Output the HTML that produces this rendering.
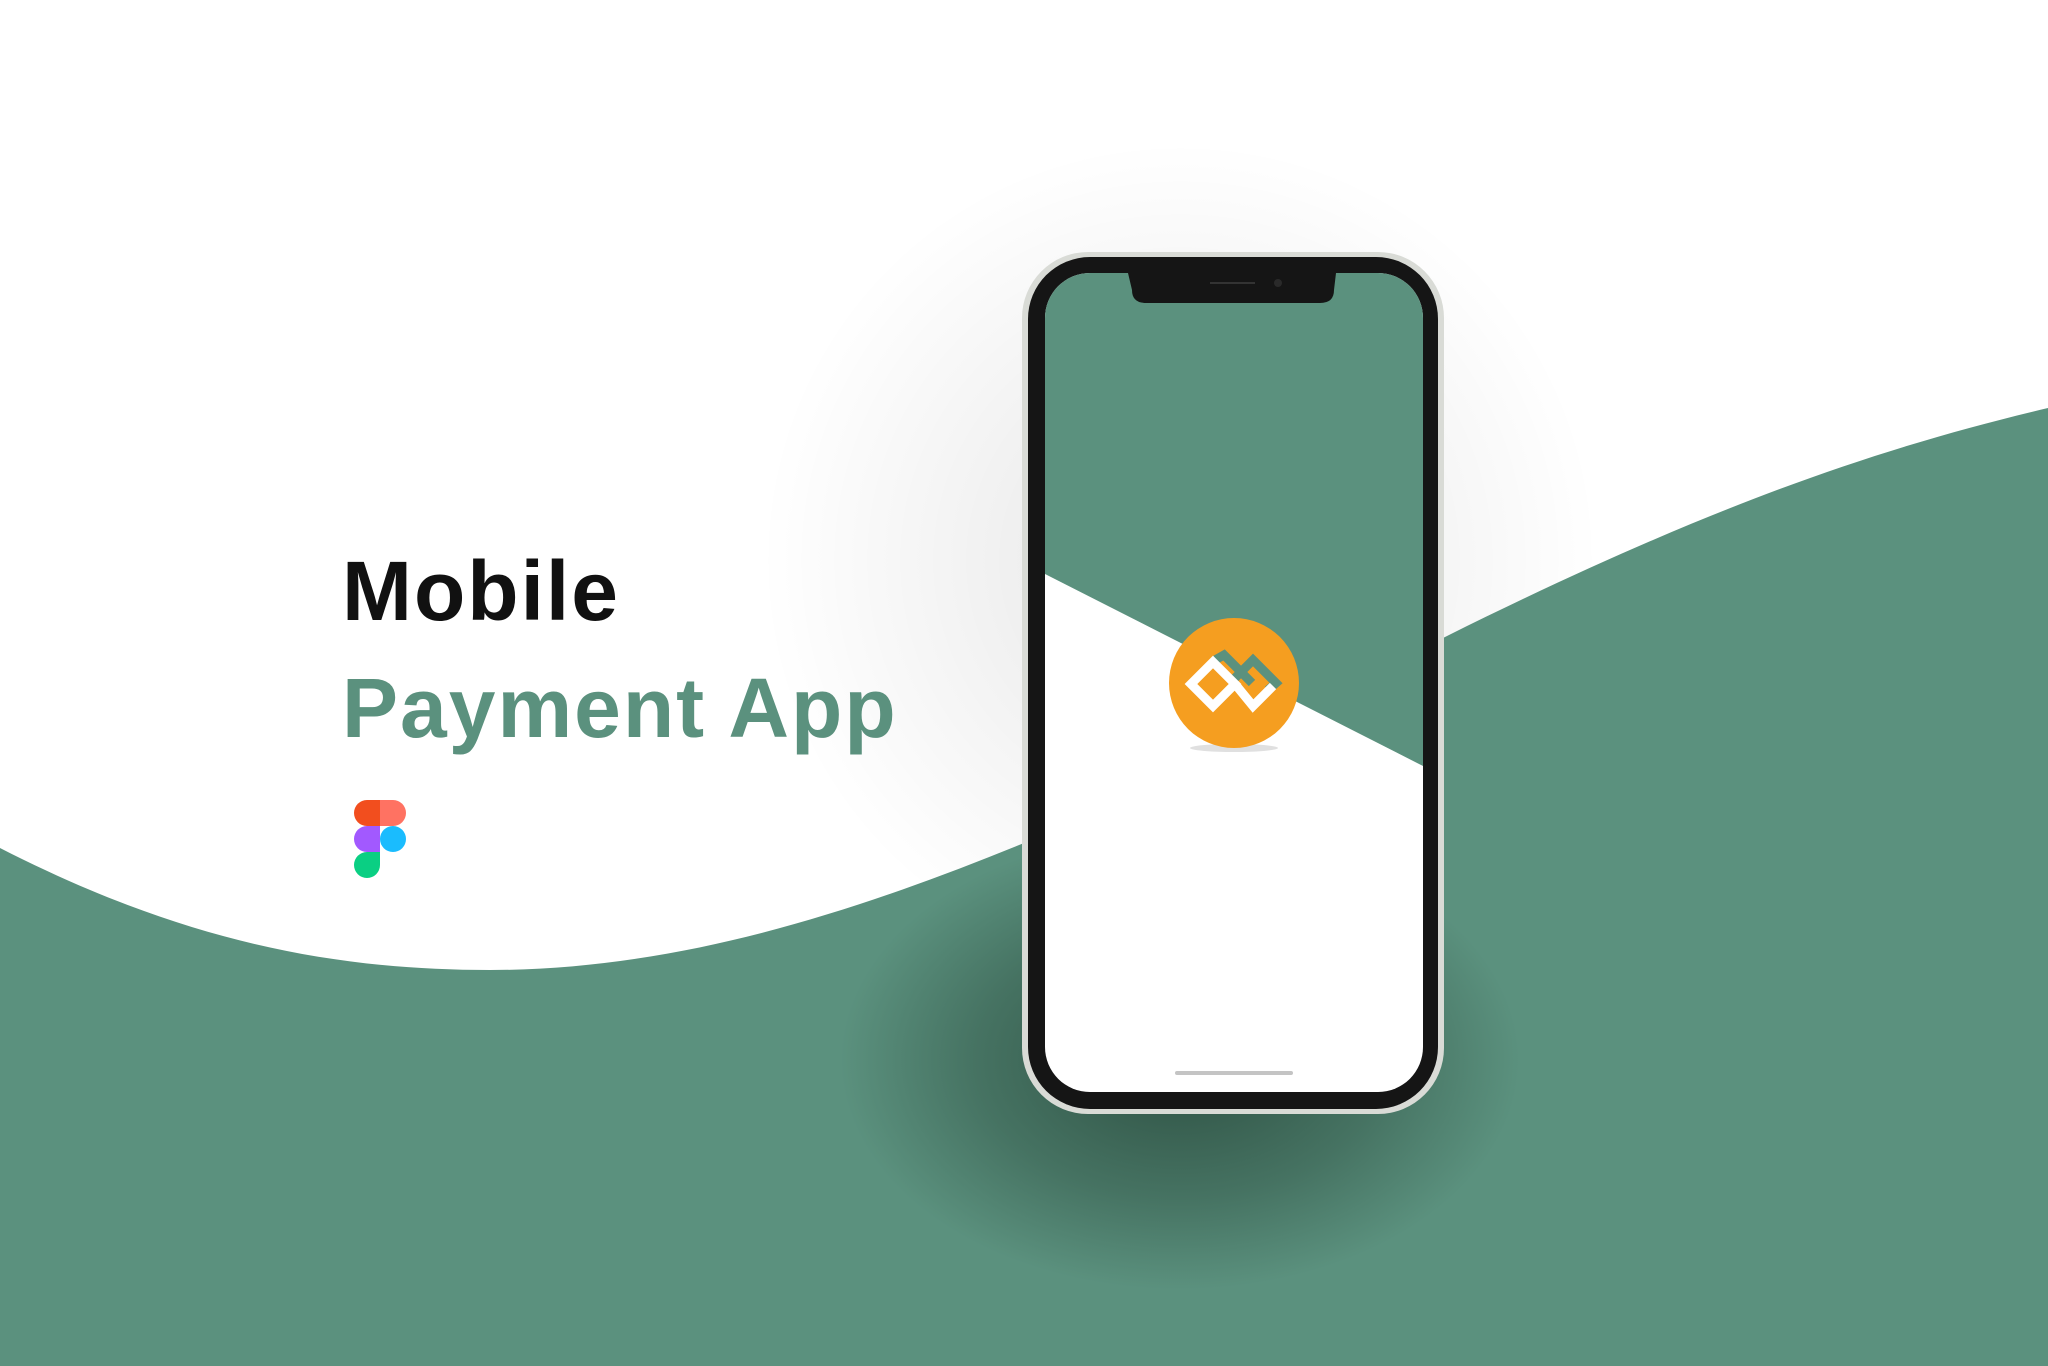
<!DOCTYPE html>
<html><head><meta charset="utf-8"><style>
html,body{margin:0;padding:0;width:2048px;height:1366px;overflow:hidden;background:#fff;font-family:"Liberation Sans",sans-serif}
.t{position:absolute;left:342px;font-weight:bold;font-size:84px;letter-spacing:2px;line-height:1}
</style></head><body>
<svg width="2048" height="1366" style="position:absolute;left:0;top:0">
<defs>
<radialGradient id="sh" cx="0.5" cy="0.5" r="0.5">
<stop offset="0" stop-color="#1e3a2e" stop-opacity="0.75"/>
<stop offset="0.6" stop-color="#1e3a2e" stop-opacity="0.35"/>
<stop offset="1" stop-color="#1e3a2e" stop-opacity="0"/>
</radialGradient>
<radialGradient id="ws" cx="0.5" cy="0.5" r="0.5">
<stop offset="0" stop-color="#000" stop-opacity="0.2"/>
<stop offset="1" stop-color="#000" stop-opacity="0"/>
</radialGradient>
<clipPath id="scr"><rect x="1045" y="273" width="378" height="819" rx="45"/></clipPath>
</defs>
<ellipse cx="1180" cy="560" rx="420" ry="420" fill="url(#ws)" opacity="0.5"/>
<path d="M0 848 C180 940 330 970 490 970 C680 970 860 910 1024 843 L1443 638 C1700 510 1870 450 2048 408 L2048 1366 L0 1366 Z" fill="#5b917e"/>
<ellipse cx="1180" cy="1060" rx="340" ry="230" fill="url(#sh)"/>
<rect x="1022" y="252" width="422" height="862" rx="66" fill="#d9dbd6"/>
<rect x="1028" y="257" width="410" height="852" rx="62" fill="#151515"/>
<g clip-path="url(#scr)">
<rect x="1045" y="273" width="378" height="819" fill="#fff"/>
<path d="M1045 273 L1423 273 L1423 766 L1045 574 Z" fill="#5b917e"/>
</g>
<path d="M1128 273 L1336 273 L1334 290 Q1334 303 1320 303 L1146 303 Q1132 303 1132 290 Z" fill="#151515"/>
<rect x="1210" y="282" width="45" height="2" fill="#333"/>
<circle cx="1278" cy="283" r="4" fill="#2a2a2a"/>
<rect x="1175" y="1071" width="118" height="4" rx="2" fill="#c4c4c4"/>
<ellipse cx="1234" cy="748" rx="44" ry="4" fill="#000" opacity="0.12"/>
<circle cx="1234" cy="683" r="65" fill="#f59e20"/>
<path d="M1215 660 L1224 655 L1252 683 M1233 680 L1253 660 L1276 683 L1268 690" stroke="#5b917e" stroke-width="9" fill="none"/>
<path d="M1213 662 L1235 684 L1213 706 L1191 684 Z" stroke="#fff" stroke-width="9" fill="none"/>
<path d="M1235 684 L1253 706 L1273 686" stroke="#fff" stroke-width="9" fill="none"/>
<g transform="translate(354,800)">
<path d="M13 0 H26 V26 H13 A13 13 0 0 1 13 0Z" fill="#f24e1e"/>
<path d="M26 0 H39 A13 13 0 0 1 39 26 H26Z" fill="#ff7262"/>
<path d="M13 26 H26 V52 H13 A13 13 0 0 1 13 26Z" fill="#a259ff"/>
<circle cx="39" cy="39" r="13" fill="#1abcfe"/>
<path d="M13 52 H26 V65 A13 13 0 1 1 13 52Z" fill="#0acf83"/>
</g>
</svg>
<div class="t" style="top:549px;color:#111">Mobile</div>
<div class="t" style="top:666px;color:#5b917e">Payment App</div>
</body></html>
